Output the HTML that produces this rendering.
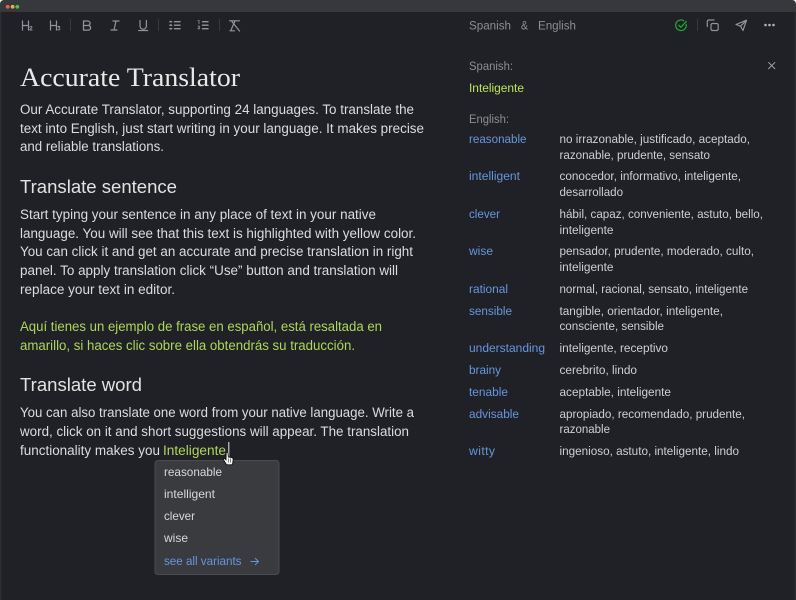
<!DOCTYPE html>
<html><head><meta charset="utf-8"><style>
html,body{margin:0;padding:0;background:#202126;width:796px;height:600px;overflow:hidden}
svg{display:block}
text{font-family:"Liberation Sans",sans-serif}
.b{font-size:13.5px;fill:#dcdcde}
.y{font-size:13.5px;fill:#aed65a}
.h{font-size:18px;fill:#e2e2e3}
.s{font-size:12.2px;fill:#cfcfd2}
.l{font-size:12.2px;fill:#6696de}
.g{font-size:12.2px;fill:#8d8e92}
.i{fill:none;stroke:#939497;stroke-width:1.2;stroke-linecap:round;stroke-linejoin:round}
.m{font-size:12px;fill:#d8d8da}
</style></head><body>
<svg width="796" height="600" viewBox="0 0 796 600" xmlns="http://www.w3.org/2000/svg">
<rect width="796" height="600" fill="#202126"/>
<rect width="796" height="12" fill="#36383b"/>
<path d="M0 0h4a4 4 0 0 0-4 4zM796 0h-4a4 4 0 0 1 4 4z" fill="#f2f2f2"/>
<circle cx="7.700" cy="6.800" r="1.900" fill="#e0605a"/><circle cx="12.600" cy="6.800" r="1.900" fill="#e2b33f"/><circle cx="17.300" cy="6.800" r="1.900" fill="#58b948"/>
<rect x="0" y="12" width="1.500" height="588" fill="#2c2d31"/><rect x="794.500" y="12" width="1.500" height="588" fill="#2c2d31"/>

<!-- toolbar -->
<g class="i">
<path d="M22.500 21v9M28.500 21v9M22.500 25.500h6"/><path d="M29.800 27.300c.3-1.200 2.200-1.200 2.200 0 0 1-2.200 1.700-2.200 2.700h2.300" stroke-width=".9"/>
<path d="M50.500 21v9M56.500 21v9M50.500 25.500h6"/><path d="M57.800 26.500h2l-1 1.300c1.300 0 1.500 2.200 0 2.200-.5 0-.9-.2-1.100-.5" stroke-width=".9"/>
<path d="M83.500 21h4.300a2.200 2.200 0 0 1 0 4.500h-4.300zM83.500 25.500h4.800a2.300 2.300 0 0 1 0 4.600h-4.800z" stroke-width="1.300"/>
<path d="M113 21h6M111 30h6M116 21l-2 9"/>
<path d="M140 20.500v5.500a3.200 3.200 0 0 0 6.400 0v-5.500M138.700 30.500h9"/>
<path d="M174.500 21.700h5.500M174.500 25.200h5.500M174.500 28.700h5.500" stroke-width="1.400"/>
<path d="M170 21.700h1.500M170 25.200h1.500M170 28.700h1.500" stroke-width="1.600"/>
<path d="M202.500 21.700h5.500M202.500 25.200h5.500M202.500 28.700h5.500" stroke-width="1.400"/>
<path d="M198 20.800l1-.5v3.500M198 26.500c.3-.8 1.800-.7 1.800.2 0 .9-1.800 1.300-1.800 2.100h1.800" stroke-width=".8"/>
<path d="M229.500 20.800h10M235 21l-4 9M230 30.800h4.500M231.500 21l8 10"/>
</g>
<g fill="none" stroke="#1fae2d" stroke-width="1.200" stroke-linecap="round" stroke-linejoin="round">
<path d="M686.200 24.300a5.300 5.300 0 1 1-2.500-3.600"/><path d="M678.800 25.200l2.100 2.100 5.400-5.900"/>
</g>
<g class="i">
<rect x="711" y="23.500" width="7.200" height="7" rx="1.500"/><path d="M707.300 26.500V21.500a1.500 1.500 0 0 1 1.500-1.500H714"/>
<path d="M736 24.500l10.500-4.300-3.500 10.300-2.500-4.300zM740.500 26.200l6-6"/>
</g>
<circle cx="765.500" cy="25" r="1.300" fill="#b0b1b4"/><circle cx="769.500" cy="25" r="1.300" fill="#b0b1b4"/><circle cx="773.500" cy="25" r="1.300" fill="#b0b1b4"/>
<g fill="#38393d"><rect x="70" y="19" width="1" height="12"/><rect x="158" y="19" width="1" height="12"/><rect x="219" y="19" width="1" height="12"/><rect x="697" y="19" width="1" height="12"/></g>
<text class="g" x="469" y="29.500" textLength="42" lengthAdjust="spacingAndGlyphs">Spanish</text>
<text class="g" x="521" y="29.500" textLength="7" lengthAdjust="spacingAndGlyphs">&amp;</text>
<text class="g" x="538" y="29.500" textLength="38" lengthAdjust="spacingAndGlyphs">English</text>

<!-- left -->
<text x="20" y="86" font-size="26" fill="#e8e8e9" textLength="220" lengthAdjust="spacingAndGlyphs" style="font-family:'Liberation Serif',serif">Accurate Translator</text>
<text class="b" x="20" y="114" textLength="394" lengthAdjust="spacingAndGlyphs">Our Accurate Translator, supporting 24 languages. To translate the</text>
<text class="b" x="20" y="133" textLength="404" lengthAdjust="spacingAndGlyphs">text into English, just start writing in your language. It makes precise</text>
<text class="b" x="20" y="151" textLength="144" lengthAdjust="spacingAndGlyphs">and reliable translations.</text>
<text class="h" x="20" y="193" textLength="157" lengthAdjust="spacingAndGlyphs">Translate sentence</text>
<text class="b" x="20" y="219" textLength="356" lengthAdjust="spacingAndGlyphs">Start typing your sentence in any place of text in your native</text>
<text class="b" x="20" y="238" textLength="396" lengthAdjust="spacingAndGlyphs">language. You will see that this text is highlighted with yellow color.</text>
<text class="b" x="20" y="256" textLength="393" lengthAdjust="spacingAndGlyphs">You can click it and get an accurate and precise translation in right</text>
<text class="b" x="20" y="275" textLength="378" lengthAdjust="spacingAndGlyphs">panel. To apply translation click “Use” button and translation will</text>
<text class="b" x="20" y="294" textLength="155" lengthAdjust="spacingAndGlyphs">replace your text in editor.</text>
<text class="y" x="20" y="331" textLength="362" lengthAdjust="spacingAndGlyphs">Aquí tienes un ejemplo de frase en español, está resaltada en</text>
<text class="y" x="20" y="350" textLength="335" lengthAdjust="spacingAndGlyphs">amarillo, si haces clic sobre ella obtendrás su traducción.</text>
<text class="h" x="20" y="391" textLength="122" lengthAdjust="spacingAndGlyphs">Translate word</text>
<text class="b" x="20" y="417" textLength="394" lengthAdjust="spacingAndGlyphs">You can also translate one word from your native language. Write a</text>
<text class="b" x="20" y="436" textLength="389" lengthAdjust="spacingAndGlyphs">word, click on it and short suggestions will appear. The translation</text>
<text class="b" x="20" y="455" textLength="140" lengthAdjust="spacingAndGlyphs">functionality makes you</text>
<text class="y" x="163" y="455" textLength="63" lengthAdjust="spacingAndGlyphs">Inteligente</text>
<rect x="228.300" y="442" width="1" height="15" fill="#e8e8e8"/>

<!-- dropdown -->
<rect x="155" y="460.500" width="124" height="114" rx="3" fill="#3a3b3f" stroke="#4a4b4f"/>
<text class="m" x="164" y="476" textLength="58" lengthAdjust="spacingAndGlyphs">reasonable</text>
<text class="m" x="164" y="498" textLength="51" lengthAdjust="spacingAndGlyphs">intelligent</text>
<text class="m" x="164" y="520" textLength="31" lengthAdjust="spacingAndGlyphs">clever</text>
<text class="m" x="164" y="542" textLength="24" lengthAdjust="spacingAndGlyphs">wise</text>
<text class="l" x="164" y="565" textLength="77.500" lengthAdjust="spacingAndGlyphs">see all variants</text>
<path d="M250.500 561.500h8M255 558l3.500 3.500-3.500 3.500" fill="none" stroke="#6696de" stroke-width=".9"/>
<!-- cursor -->
<path d="M226.200 452.500c.9-.6 1.800 0 1.900 1l.3 3.500 3.400.6c1 .2 1.500 1 1.400 2l-.5 3.700c-.2.900-.7 1.500-1.400 1.500h-4c-.6 0-1-.4-1.300-.9l-2.500-4c-.5-1 .6-1.800 1.500-1l1 .9z" fill="#f6f6f6" stroke="#111" stroke-width=".9"/>
<path d="M228.700 458.500v4M230.400 458.500v4" stroke="#333" stroke-width=".6" fill="none"/>

<!-- right -->
<text class="g" x="469" y="70" textLength="44" lengthAdjust="spacingAndGlyphs">Spanish:</text>
<path d="M768.300 62.200l6.800 6.800M775.100 62.200l-6.800 6.800" stroke="#a0a1a4" stroke-width="1" fill="none"/>
<text x="469" y="92" font-size="12.200" fill="#bce65c" textLength="55" lengthAdjust="spacingAndGlyphs">Inteligente</text>
<text class="g" x="469" y="123" textLength="40" lengthAdjust="spacingAndGlyphs">English:</text>

<text class="l" x="469" y="143" textLength="57.500" lengthAdjust="spacingAndGlyphs">reasonable</text>
<text class="s" x="559.500" y="143" textLength="190.500" lengthAdjust="spacingAndGlyphs">no irrazonable, justificado, aceptado,</text>
<text class="s" x="559.500" y="159" textLength="150.500" lengthAdjust="spacingAndGlyphs">razonable, prudente, sensato</text>
<text class="l" x="469" y="180" textLength="51" lengthAdjust="spacingAndGlyphs">intelligent</text>
<text class="s" x="559.500" y="180" textLength="181.500" lengthAdjust="spacingAndGlyphs">conocedor, informativo, inteligente,</text>
<text class="s" x="559.500" y="196" textLength="63.500" lengthAdjust="spacingAndGlyphs">desarrollado</text>
<text class="l" x="469" y="218" textLength="31" lengthAdjust="spacingAndGlyphs">clever</text>
<text class="s" x="559.500" y="218" textLength="203.500" lengthAdjust="spacingAndGlyphs">hábil, capaz, conveniente, astuto, bello,</text>
<text class="s" x="559.500" y="234" textLength="54" lengthAdjust="spacingAndGlyphs">inteligente</text>
<text class="l" x="469" y="255" textLength="24" lengthAdjust="spacingAndGlyphs">wise</text>
<text class="s" x="559.500" y="255" textLength="194.500" lengthAdjust="spacingAndGlyphs">pensador, prudente, moderado, culto,</text>
<text class="s" x="559.500" y="271" textLength="54" lengthAdjust="spacingAndGlyphs">inteligente</text>
<text class="l" x="469" y="293" textLength="39" lengthAdjust="spacingAndGlyphs">rational</text>
<text class="s" x="559.500" y="293" textLength="188.500" lengthAdjust="spacingAndGlyphs">normal, racional, sensato, inteligente</text>
<text class="l" x="469" y="315" textLength="43" lengthAdjust="spacingAndGlyphs">sensible</text>
<text class="s" x="559.500" y="315" textLength="163.500" lengthAdjust="spacingAndGlyphs">tangible, orientador, inteligente,</text>
<text class="s" x="559.500" y="330" textLength="104.500" lengthAdjust="spacingAndGlyphs">consciente, sensible</text>
<text class="l" x="469" y="352" textLength="76" lengthAdjust="spacingAndGlyphs">understanding</text>
<text class="s" x="559.500" y="352" textLength="108.500" lengthAdjust="spacingAndGlyphs">inteligente, receptivo</text>
<text class="l" x="469" y="374" textLength="32" lengthAdjust="spacingAndGlyphs">brainy</text>
<text class="s" x="559.500" y="374" textLength="77.500" lengthAdjust="spacingAndGlyphs">cerebrito, lindo</text>
<text class="l" x="469" y="396" textLength="39" lengthAdjust="spacingAndGlyphs">tenable</text>
<text class="s" x="559.500" y="396" textLength="111.500" lengthAdjust="spacingAndGlyphs">aceptable, inteligente</text>
<text class="l" x="469" y="418" textLength="50" lengthAdjust="spacingAndGlyphs">advisable</text>
<text class="s" x="559.500" y="418" textLength="185.500" lengthAdjust="spacingAndGlyphs">apropiado, recomendado, prudente,</text>
<text class="s" x="559.500" y="433" textLength="50.500" lengthAdjust="spacingAndGlyphs">razonable</text>
<text class="l" x="469" y="455" textLength="26" lengthAdjust="spacing">witty</text>
<text class="s" x="559.500" y="455" textLength="179.500" lengthAdjust="spacingAndGlyphs">ingenioso, astuto, inteligente, lindo</text>
</svg>
</body></html>
